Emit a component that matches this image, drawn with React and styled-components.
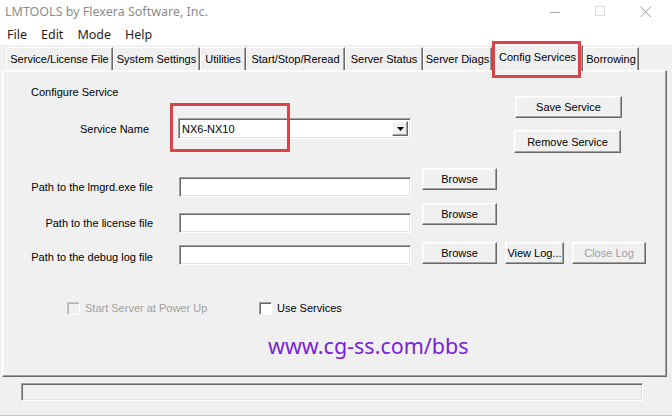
import React from "react";
import styled, { createGlobalStyle } from "styled-components";

const GlobalStyle = createGlobalStyle`
  html, body {
    margin: 0;
    padding: 0;
    background: #f0f0f0;
  }
  body {
    width: 672px;
    height: 416px;
    overflow: hidden;
  }
`;

const uiFont = `"Liberation Sans", Arial, sans-serif`;

const raised = `
  border-top: 1px solid #ffffff;
  border-left: 1px solid #ffffff;
  border-right: 1px solid #696969;
  border-bottom: 1px solid #696969;
  box-shadow: inset -1px -1px 0 #a0a0a0, inset 1px 1px 0 #f8f8f8;
`;

const sunken = `
  border-top: 1px solid #a0a0a0;
  border-left: 1px solid #a0a0a0;
  border-right: 1px solid #ffffff;
  border-bottom: 1px solid #ffffff;
  box-shadow: inset 1px 1px 0 #696969, inset -1px -1px 0 #e3e3e3;
`;

const Window = styled.div`
  width: 672px;
  height: 416px;
  box-sizing: border-box;
  display: flex;
  flex-direction: column;
  background: #f0f0f0;
  font-family: ${uiFont};
  font-size: 11px;
  color: #000;
  border-bottom: 1px solid #c8c8c8;
`;

const TitleBar = styled.div`
  height: 23px;
  display: flex;
  align-items: center;
  padding: 0 4px 0 5px;
  background: #fff;
`;

const Title = styled.div`
  flex: 1;
  font-family: "Noto Sans", "Liberation Sans", sans-serif;
  font-size: 12.5px;
  color: #8c8c8c;
`;

const Controls = styled.div`
  display: flex;
`;

const Ctl = styled.div`
  width: 45px;
  height: 23px;
  display: flex;
  align-items: center;
  justify-content: center;
`;

const MenuBar = styled.div`
  height: 22px;
  display: flex;
  align-items: center;
  gap: 14px;
  padding-left: 7px;
  background: #fff;
  font-family: "Noto Sans", "Liberation Sans", sans-serif;
  font-size: 12.5px;
  color: #1e1e1e;
`;

const TabStrip = styled.div`
  height: 25px;
  display: flex;
  align-items: flex-end;
  padding-left: 6px;
  position: relative;
  z-index: 1;
`;

const Tab = styled.div`
  position: relative;
  box-sizing: border-box;
  width: ${p => p.w}px;
  height: ${p => (p.active ? 26 : 23)}px;
  margin-bottom: ${p => (p.active ? -1 : 0)}px;
  display: flex;
  align-items: center;
  justify-content: center;
  padding-bottom: ${p => (p.active ? 3 : 0)}px;
  background: #f0f0f0;
  border-top: 1px solid #fff;
  border-left: 1px solid #fff;
  border-right: 1px solid #696969;
  box-shadow: inset -1px 0 0 #a0a0a0;
  white-space: nowrap;
`;

const Highlight = styled.div`
  position: absolute;
  box-sizing: border-box;
  border: 3px solid #d9434b;
  pointer-events: none;
`;

const Panel = styled.div`
  box-sizing: border-box;
  height: 307px;
  margin: 0 5px 0 2px;
  padding-top: 14px;
  display: flex;
  flex-direction: column;
  ${raised}
`;

const TopSection = styled.div`
  display: flex;
`;

const LeftCol = styled.div`
  display: flex;
  flex-direction: column;
`;

const RightCol = styled.div`
  display: flex;
  flex-direction: column;
  margin-left: 104px;
  padding-top: 11px;
`;

const SectionTitle = styled.div`
  margin-left: 28px;
  line-height: 14px;
`;

const FieldRow = styled.div`
  display: flex;
  flex-shrink: 0;
  align-items: ${p => (p.center ? "center" : "flex-start")};
  margin-top: ${p => p.top || 0}px;
  height: ${p => (p.h ? `${p.h}px` : "auto")};
`;

const Label = styled.div`
  width: ${p => p.w || 150}px;
  text-align: right;
  line-height: 14px;
  margin-top: ${p => p.top || 0}px;
  white-space: nowrap;
`;

const Field = styled.div`
  box-sizing: border-box;
  position: relative;
  width: ${p => p.w}px;
  height: ${p => p.h || 20}px;
  margin-left: ${p => p.left}px;
  margin-top: ${p => p.top || 0}px;
  background: #fff;
  display: flex;
  align-items: center;
  padding-left: 3px;
  ${sunken}
`;

const DropButton = styled.div`
  box-sizing: border-box;
  position: absolute;
  right: 2px;
  top: 2px;
  bottom: 2px;
  width: 16px;
  background: #f0f0f0;
  display: flex;
  align-items: center;
  justify-content: center;
  ${raised}
`;

const Button = styled.div`
  box-sizing: border-box;
  width: ${p => p.w}px;
  height: ${p => p.h || 22}px;
  margin-left: ${p => p.left || 0}px;
  margin-top: ${p => p.top || 0}px;
  display: flex;
  align-items: center;
  justify-content: center;
  background: #f0f0f0;
  color: ${p => (p.disabled ? "#a0a0a0" : "#000")};
  white-space: nowrap;
  ${raised}
`;

const CheckRow = styled.div`
  display: flex;
  align-items: center;
  margin-top: 36px;
  padding-left: 64px;
`;

const CheckItem = styled.div`
  display: flex;
  align-items: center;
  gap: 5px;
  width: ${p => (p.w ? `${p.w}px` : "auto")};
  color: ${p => (p.disabled ? "#a0a0a0" : "#000")};
  line-height: 14px;
`;

const Box = styled.div`
  box-sizing: border-box;
  width: 13px;
  height: 13px;
  background: ${p => (p.disabled ? "#f0f0f0" : "#fff")};
  border-top: 1px solid ${p => (p.disabled ? "#c8c8c8" : "#a0a0a0")};
  border-left: 1px solid ${p => (p.disabled ? "#c8c8c8" : "#a0a0a0")};
  border-right: 1px solid #fff;
  border-bottom: 1px solid #fff;
  box-shadow: inset 1px 1px 0 ${p => (p.disabled ? "#b4b4b4" : "#696969")};
`;

const Watermark = styled.div`
  margin: 18px 0 0 265px;
  font-family: "Noto Sans", "Open Sans", sans-serif;
  font-size: 21.5px;
  line-height: 26px;
  color: #7a1fd8;
`;

const StatusArea = styled.div`
  flex: 1;
  padding: 6px 0 0 21px;
`;

const StatusBox = styled.div`
  box-sizing: border-box;
  width: 622px;
  height: 18px;
  ${sunken}
`;

const tabs = [
  { label: "Service/License File", w: 107 },
  { label: "System Settings", w: 87 },
  { label: "Utilities", w: 46 },
  { label: "Start/Stop/Reread", w: 99 },
  { label: "Server Status", w: 78 },
  { label: "Server Diags", w: 69 },
  { label: "Config Services", w: 91, active: true },
  { label: "Borrowing", w: 56 },
];

const paths = [
  { label: "Path to the lmgrd.exe file", top: 15, h: 35, labelTop: 12, fieldTop: 9 },
  { label: "Path to the license file", h: 39, labelTop: 13, fieldTop: 10 },
  { label: "Path to the debug log file", h: 23, labelTop: 8, fieldTop: 3, log: true },
];

const App = () => {
  return (
    <Window>
      <GlobalStyle />
      <TitleBar>
        <Title>LMTOOLS by Flexera Software, Inc.</Title>
        <Controls>
          <Ctl>
            <svg width="11" height="11" viewBox="0 0 11 11">
              <path d="M0 6.5h10" stroke="#a8a8a8" strokeWidth="1" />
            </svg>
          </Ctl>
          <Ctl>
            <svg width="11" height="11" viewBox="0 0 11 11">
              <rect x="0.5" y="0.5" width="9" height="9" fill="none" stroke="#dcdcdc" strokeWidth="1" />
            </svg>
          </Ctl>
          <Ctl>
            <svg width="12" height="12" viewBox="0 0 12 12">
              <path d="M0.5 0.5L11 11M11 0.5L0.5 11" stroke="#9a9a9a" strokeWidth="1" />
            </svg>
          </Ctl>
        </Controls>
      </TitleBar>
      <MenuBar>
        <span>File</span>
        <span>Edit</span>
        <span>Mode</span>
        <span>Help</span>
      </MenuBar>
      <TabStrip>
        {tabs.map(t => (
          <Tab key={t.label} w={t.w} active={t.active}>
            {t.label}
            {t.active && <Highlight style={{ left: -1, top: -5, width: 89, height: 37 }} />}
          </Tab>
        ))}
      </TabStrip>
      <Panel>
        <TopSection>
          <LeftCol>
            <SectionTitle>Configure Service</SectionTitle>
            <FieldRow center top={19}>
              <Label w={146}>Service Name</Label>
              <Field w={233} h={21} left={29}>
                NX6-NX10
                <DropButton>
                  <svg width="7" height="4" viewBox="0 0 7 4">
                    <path d="M0 0h7L3.5 4z" fill="#000" />
                  </svg>
                </DropButton>
                <Highlight style={{ left: -9, top: -16, width: 120, height: 49 }} />
              </Field>
            </FieldRow>
          </LeftCol>
          <RightCol>
            <Button w={107}>Save Service</Button>
            <Button w={107} h={23} top={12} left={-1}>
              Remove Service
            </Button>
          </RightCol>
        </TopSection>
        {paths.map(p => (
          <FieldRow key={p.label} top={p.top} h={p.h}>
            <Label top={p.labelTop}>{p.label}</Label>
            <Field w={232} left={26} top={p.fieldTop} />
            <Button w={75} left={11}>
              Browse
            </Button>
            {p.log && (
              <>
                <Button w={59} left={8}>
                  View Log...
                </Button>
                <Button w={74} left={8} disabled>
                  Close Log
                </Button>
              </>
            )}
          </FieldRow>
        ))}
        <CheckRow>
          <CheckItem w={192} disabled>
            <Box disabled />
            Start Server at Power Up
          </CheckItem>
          <CheckItem>
            <Box />
            Use Services
          </CheckItem>
        </CheckRow>
        <Watermark>www.cg-ss.com/bbs</Watermark>
      </Panel>
      <StatusArea>
        <StatusBox />
      </StatusArea>
    </Window>
  );
};

export default App;
